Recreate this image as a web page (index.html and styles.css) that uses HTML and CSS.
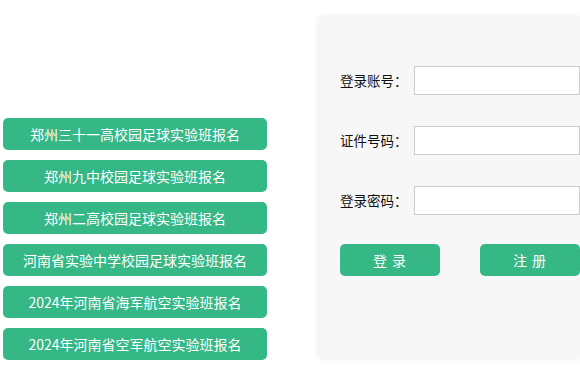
FILE: index.html
```html
<!DOCTYPE html>
<html lang="zh">
<head>
<meta charset="utf-8">
<link rel="stylesheet" href="styles.css">
</head>
<body>
<div class="page">
  <div class="links">
    <a class="link-btn">郑州三十一高校园足球实验班报名</a>
    <a class="link-btn">郑州九中校园足球实验班报名</a>
    <a class="link-btn">郑州二高校园足球实验班报名</a>
    <a class="link-btn">河南省实验中学校园足球实验班报名</a>
    <a class="link-btn">2024年河南省海军航空实验班报名</a>
    <a class="link-btn">2024年河南省空军航空实验班报名</a>
  </div>
  <div class="panel">
    <div class="row">
      <label class="label">登录账号：</label>
      <input class="field" type="text">
    </div>
    <div class="row">
      <label class="label">证件号码：</label>
      <input class="field" type="text">
    </div>
    <div class="row">
      <label class="label">登录密码：</label>
      <input class="field" type="password">
    </div>
    <div class="actions">
      <button class="act-btn">登 录</button>
      <button class="act-btn">注 册</button>
    </div>
  </div>
</div>
</body>
</html>
```
FILE: styles.css
```css
html, body {
  margin: 0;
  padding: 0;
  overflow: hidden;
  background: #fff;
}
body {
  width: 580px;
  height: 373px;
  font-family: "Noto Sans CJK SC", "Noto Sans", sans-serif;
}
.page {
  display: flex;
  align-items: flex-start;
}
.links {
  display: flex;
  flex-direction: column;
  gap: 10px;
  padding-top: 118px;
  padding-left: 3px;
  width: 264px;
  flex-shrink: 0;
}
.link-btn {
  display: flex;
  align-items: center;
  justify-content: center;
  height: 32px;
  background: #35b786;
  color: #fff;
  border-radius: 5px;
  font-size: 14px;
  line-height: 1;
  white-space: nowrap;
}
.panel {
  margin-left: 52px;
  margin-top: 17px;
  width: 261px;
  height: 341px;
  flex-shrink: 0;
  background: #f7f7f7;
  box-shadow: 0 0 6px rgba(0, 0, 0, 0.1);
  box-sizing: border-box;
  padding: 49px 0 0 21px;
  display: flex;
  flex-direction: column;
  gap: 31px;
}
.row {
  display: flex;
  align-items: center;
  height: 29px;
}
.label {
  width: 74px;
  font-size: 13.5px;
  color: #111;
  line-height: 1;
}
.field {
  width: 166px;
  height: 29px;
  box-sizing: border-box;
  border: 1px solid #ccc;
  background: #fff;
  margin: 0;
  padding: 0 6px;
  outline: none;
}
.actions {
  display: flex;
  gap: 40px;
  margin-top: -2px;
}
.act-btn {
  width: 100px;
  height: 32px;
  border: 0;
  border-radius: 5px;
  background: #35b786;
  color: #fff;
  font-family: "Noto Sans CJK SC", "Noto Sans", sans-serif;
  font-size: 14px;
  padding: 0;
  line-height: 1;
  letter-spacing: 1px;
}
```
